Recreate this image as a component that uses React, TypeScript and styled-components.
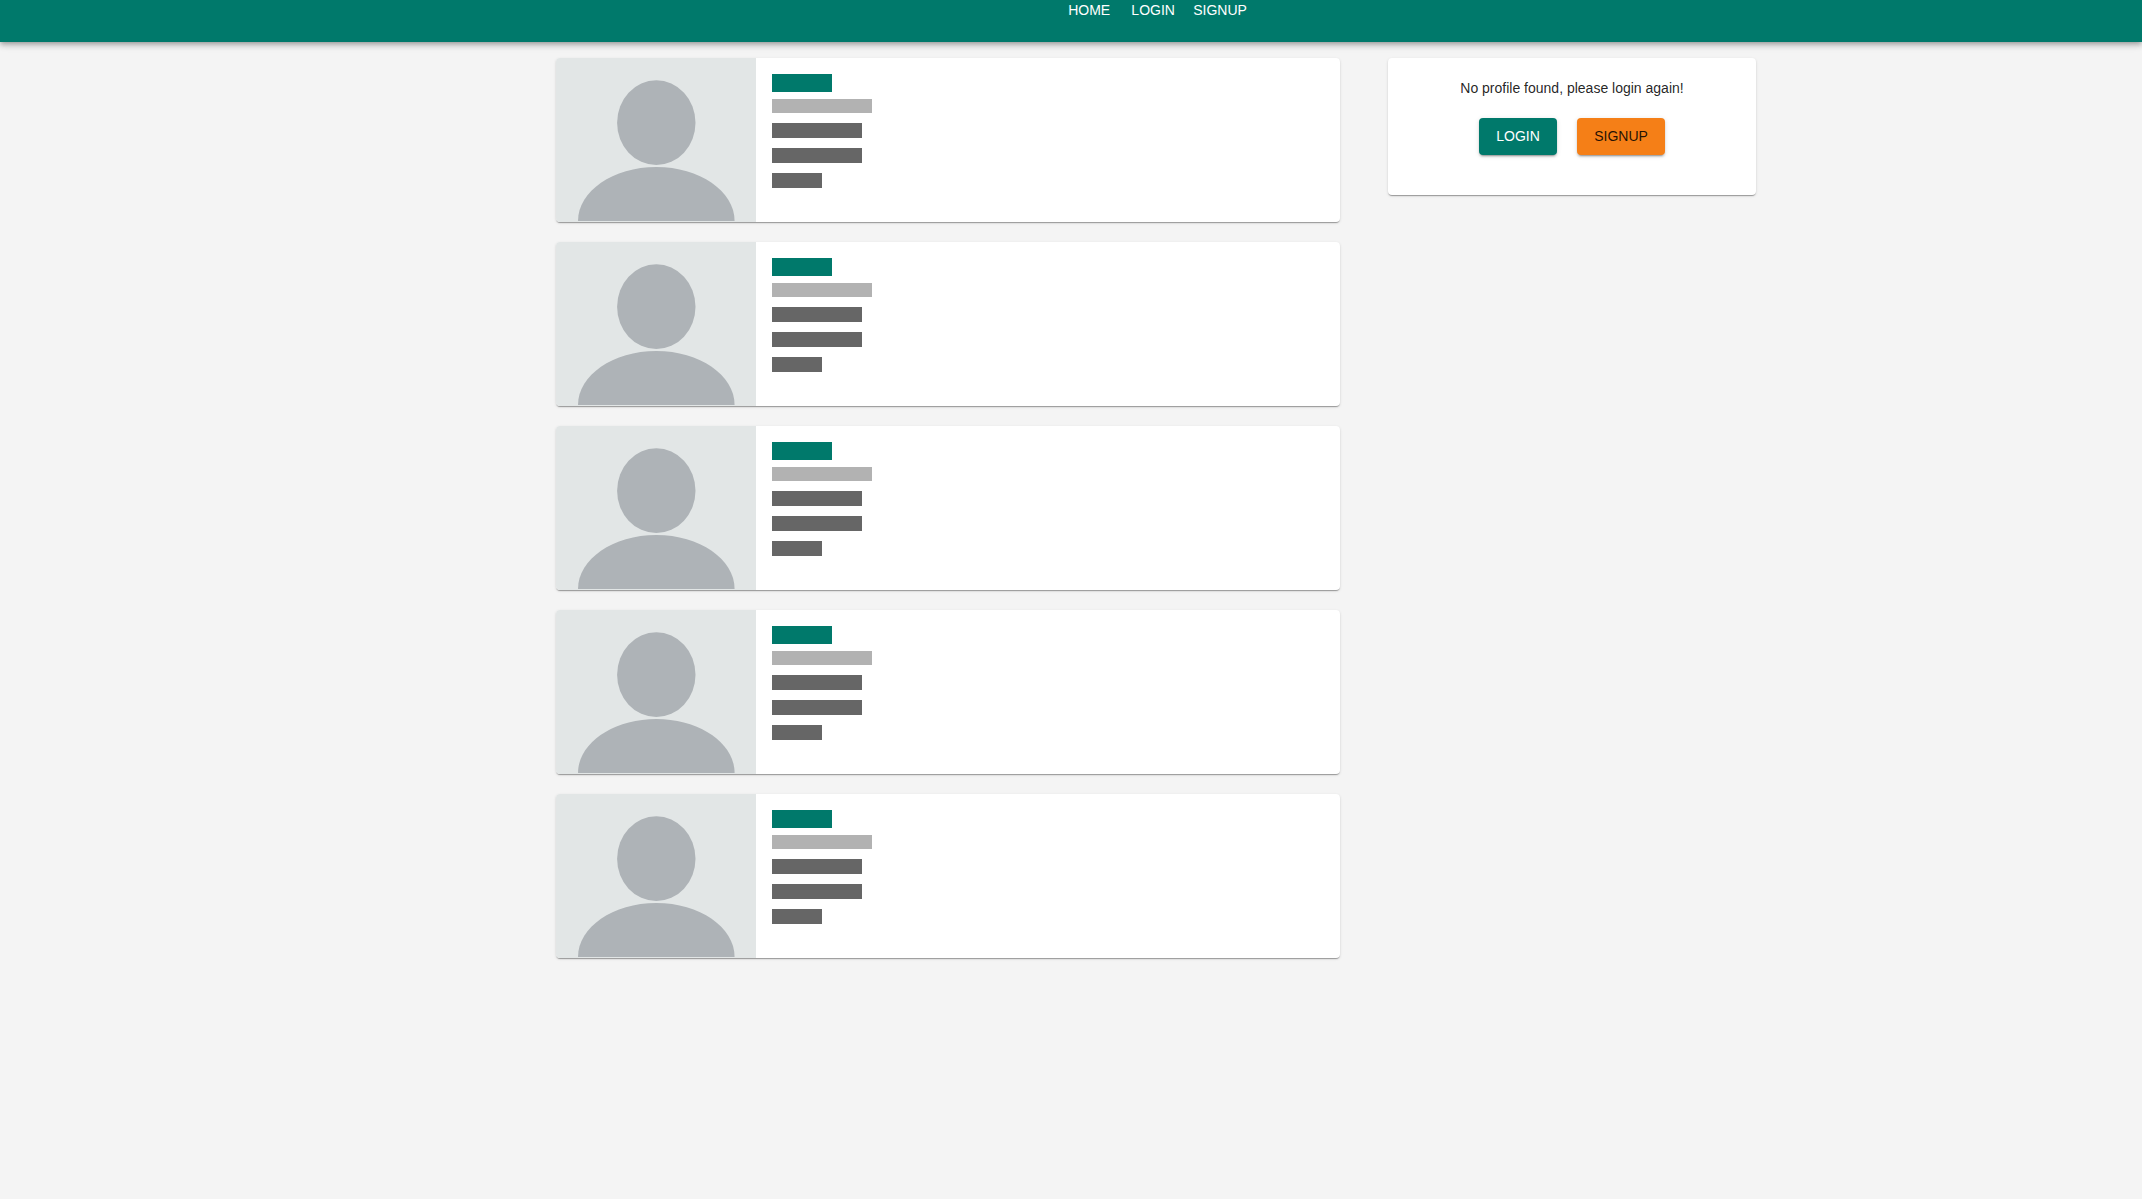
import React from "react";
import styled, { createGlobalStyle } from "styled-components";

const teal = "#00796b";
const orange = "#f57f17";

const GlobalStyle = createGlobalStyle`
  *, *::before, *::after { box-sizing: border-box; }
  body {
    margin: 0;
    background: #f4f4f4;
    color: rgba(0, 0, 0, 0.87);
    font-family: "Liberation Sans", Arial, Helvetica, sans-serif;
    font-size: 14px;
    line-height: 20px;
  }
`;

const Header = styled.header`
  position: relative;
  display: flex;
  height: 42px;
  padding-left: 170px;
  background: ${teal};
  box-shadow:
    0 2px 4px -1px rgba(0, 0, 0, 0.2),
    0 4px 5px 0 rgba(0, 0, 0, 0.14),
    0 1px 10px 0 rgba(0, 0, 0, 0.12);

  @media (max-width: 1400px) {
    padding-left: 0;
  }
`;

const Nav = styled.nav`
  display: flex;
  align-items: flex-start;
  margin: 0 auto;
`;

const NavLink = styled.a`
  min-width: 64px;
  padding: 0 8px;
  color: #fff;
  text-align: center;
  text-decoration: none;
`;

const Page = styled.main`
  padding: 16px 0 20px 170px;

  @media (max-width: 1400px) {
    padding: 16px 24px;
  }
`;

const Container = styled.div`
  display: grid;
  grid-template-columns: minmax(0, 784fr) minmax(0, 368fr);
  column-gap: 48px;
  align-items: start;
  max-width: 1200px;
  margin: 0 auto;

  @media (max-width: 800px) {
    grid-template-columns: 1fr;
    row-gap: 20px;
  }
`;

const Feed = styled.section`
  display: grid;
  gap: 20px;
`;

const Card = styled.article`
  overflow: hidden;
  border-radius: 4px;
  background: #fff;
  box-shadow:
    0 2px 1px -1px rgba(0, 0, 0, 0.2),
    0 1px 1px 0 rgba(0, 0, 0, 0.14),
    0 1px 3px 0 rgba(0, 0, 0, 0.12);
`;

const PostCard = styled(Card)`
  display: flex;
`;

const Avatar = styled.svg`
  display: block;
  flex: none;
  width: 200px;
  height: 164px;
  background: #e2e6e6;
`;

const PostContent = styled.div`
  flex: 1;
  padding: 16px;
`;

const Bar = styled.div<{ $width: number }>`
  width: ${(p) => p.$width}px;
  max-width: 100%;
`;

const NameBar = styled(Bar)`
  height: 18px;
  margin-bottom: 7px;
  background: ${teal};
`;

const DateBar = styled(Bar)`
  height: 14px;
  margin-bottom: 10px;
  background: #b2b2b2;
`;

const TextBar = styled(Bar)`
  height: 15px;
  margin-bottom: 10px;
  background: #666;
`;

const ProfileCard = styled(Card)`
  padding: 20px 20px 40px;
  text-align: center;
`;

const Message = styled.p`
  margin: 0 0 20px;
`;

const Actions = styled.div`
  display: flex;
  justify-content: center;
  gap: 20px;
`;

const Button = styled.button<{ $tone: "primary" | "secondary" }>`
  min-width: ${(p) => (p.$tone === "primary" ? 78 : 88)}px;
  height: 37px;
  padding: 0 16px 2px;
  border: 0;
  border-radius: 4px;
  background: ${(p) => (p.$tone === "primary" ? teal : orange)};
  color: ${(p) => (p.$tone === "primary" ? "#fff" : "rgba(0, 0, 0, 0.87)")};
  font: inherit;
  cursor: pointer;
  box-shadow:
    0 3px 1px -2px rgba(0, 0, 0, 0.2),
    0 2px 2px 0 rgba(0, 0, 0, 0.14),
    0 1px 5px 0 rgba(0, 0, 0, 0.12);
`;

const links = ["HOME", "LOGIN", "SIGNUP"];
const placeholders = [1, 2, 3, 4, 5];

function PostSkeleton() {
  return (
    <PostCard>
      <Avatar viewBox="0 0 200 164" aria-hidden="true">
        <g fill="#aeb3b7">
          <ellipse cx="100.3" cy="64.7" rx="39.2" ry="42.4" />
          <path d="M22 163 C22 133.2 57.1 109 100.3 109 S178.6 133.2 178.6 163 Z" />
        </g>
      </Avatar>
      <PostContent>
        <NameBar $width={60} />
        <DateBar $width={100} />
        <TextBar $width={90} />
        <TextBar $width={90} />
        <TextBar $width={50} />
      </PostContent>
    </PostCard>
  );
}

export default function App() {
  return (
    <>
      <GlobalStyle />
      <Header>
        <Nav>
          {links.map((label) => (
            <NavLink key={label} href={`#${label.toLowerCase()}`}>
              {label}
            </NavLink>
          ))}
        </Nav>
      </Header>
      <Page>
        <Container>
          <Feed>
            {placeholders.map((id) => (
              <PostSkeleton key={id} />
            ))}
          </Feed>
          <ProfileCard as="aside">
            <Message>No profile found, please login again!</Message>
            <Actions>
              <Button type="button" $tone="primary">LOGIN</Button>
              <Button type="button" $tone="secondary">SIGNUP</Button>
            </Actions>
          </ProfileCard>
        </Container>
      </Page>
    </>
  );
}
